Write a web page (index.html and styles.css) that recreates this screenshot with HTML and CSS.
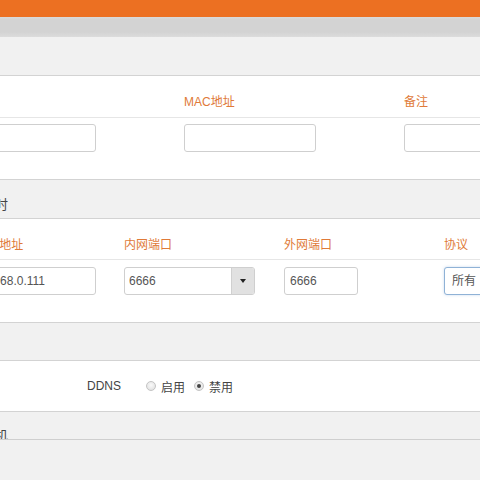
FILE: index.html
```html
<!DOCTYPE html>
<html lang="zh">
<head>
<meta charset="utf-8">
<title>端口映射</title>
<link rel="stylesheet" href="styles.css">
</head>
<body>
<div class="topbar"></div>
<div class="nav"></div>
<div class="head head-first"></div>

<div class="panel">
  <div class="label-row row-a cols-wide">
    <div class="col"></div>
    <div class="col"><span class="lbl">MAC地址</span></div>
    <div class="col"><span class="lbl">备注</span></div>
  </div>
  <div class="input-row row-a cols-wide">
    <div class="col"><div class="input w132"></div></div>
    <div class="col"><div class="input w132"></div></div>
    <div class="col"><div class="input w132"></div></div>
  </div>
</div>

<div class="head head-mid"><span class="head-text">定时</span></div>

<div class="panel">
  <div class="label-row row-b cols-narrow">
    <div class="col"><span class="lbl">内网IP地址</span></div>
    <div class="col"><span class="lbl">内网端口</span></div>
    <div class="col"><span class="lbl">外网端口</span></div>
    <div class="col"><span class="lbl">协议</span></div>
  </div>
  <div class="input-row row-c cols-narrow">
    <div class="col"><div class="input w132">192.168.0.111</div></div>
    <div class="col">
      <div class="select w130">
        <span class="select-val">6666</span>
        <span class="select-btn"><span class="caret"></span></span>
      </div>
    </div>
    <div class="col"><div class="input w73">6666</div></div>
    <div class="col"><div class="input focus w80">所有</div></div>
  </div>
</div>

<div class="head head-empty"></div>

<div class="panel ddns-panel">
  <div class="ddns">
    <span class="ddns-label">DDNS</span>
    <span class="radio"></span><span class="radio-text">启用</span>
    <span class="radio checked"></span><span class="radio-text">禁用</span>
  </div>
</div>

<div class="head head-last"><span class="head-text">主机</span></div>
</body>
</html>
```
FILE: styles.css
```css
html, body {
  margin: 0;
  padding: 0;
  background: #f1f1f1;
  overflow: hidden;
  font-family: "Liberation Sans", "Noto Sans CJK SC", sans-serif;
  font-size: 12px;
  color: #444;
}

.topbar {
  height: 17px;
  background: #ec7022;
}

.nav {
  height: 20px;
  background: linear-gradient(#dadada 0, #d3d3d3 3px, #d3d3d3 15px, #dcdcdc 20px);
}

.head {
  box-sizing: border-box;
  background: #f1f1f1;
  border-bottom: 1px solid #d3d3d3;
  line-height: 18px;
  font-size: 13px;
  color: #444;
  overflow: hidden;
}

.head-first {
  height: 39px;
}

.head-mid {
  height: 39px;
  padding-top: 16px;
}

.head-text {
  display: inline-block;
  margin-left: -18px;
}

.head-empty {
  height: 38px;
}

.head-last {
  height: 28px;
  padding-top: 17px;
  line-height: 14px;
  border-bottom-color: #cfcfcf;
}

.panel {
  background: #fff;
  border-bottom: 1px solid #d3d3d3;
}

.label-row {
  display: flex;
  box-sizing: border-box;
  padding-top: 17px;
  line-height: 18px;
  border-bottom: 1px solid #e6e6e6;
  margin-left: -36px;
}

.label-row.row-a {
  height: 42px;
}

.label-row.row-b {
  height: 41px;
}

.lbl {
  color: #e07a38;
  font-size: 12px;
  white-space: nowrap;
}

.input-row {
  display: flex;
  margin-left: -36px;
  box-sizing: border-box;
}

.input-row.row-a {
  padding-top: 6px;
  height: 61px;
}

.input-row.row-c {
  padding-top: 7px;
  height: 62px;
}

.cols-wide .col {
  flex: 0 0 220px;
}

.cols-narrow .col {
  flex: 0 0 160px;
}

.input,
.select {
  height: 28px;
  box-sizing: border-box;
  border: 1px solid #cfcfcf;
  border-radius: 3px;
  padding-left: 5px;
  line-height: 26px;
  color: #555;
  font-size: 12px;
  white-space: nowrap;
  overflow: hidden;
  background: #fff;
}

.w132 { width: 132px; }
.w130 { width: 131px; }
.w73 { width: 74px; }
.w80 { width: 80px; padding-left: 7px; }

.focus {
  border-color: #8fb2d6;
  box-shadow: 0 0 3px rgba(102, 150, 210, 0.35);
}

.select {
  display: flex;
  padding-left: 0;
}

.select-val {
  flex: 1;
  padding-left: 4px;
}

.select-btn {
  flex: 0 0 22px;
  background: #e1e1e1;
  border-left: 1px solid #d0d0d0;
  display: flex;
  align-items: center;
  justify-content: center;
}

.caret {
  width: 0;
  height: 0;
  border-left: 3px solid transparent;
  border-right: 3px solid transparent;
  border-top: 4px solid #222;
}

.ddns-panel {
  height: 50px;
}

.ddns {
  display: flex;
  align-items: center;
  height: 50px;
  padding-left: 87px;
}

.ddns-label {
  color: #444;
  margin-right: 25px;
}

.radio {
  width: 10px;
  height: 10px;
  box-sizing: border-box;
  border-radius: 50%;
  border: 1px solid #c4c4c4;
  background: radial-gradient(circle at 50% 40%, #fafafa 0, #dcdcdc 100%);
  margin-right: 5px;
  position: relative;
}

.radio.checked::after {
  content: "";
  position: absolute;
  left: 2px;
  top: 2px;
  width: 4px;
  height: 4px;
  border-radius: 50%;
  background: #444;
}

.radio-text {
  color: #444;
  margin-right: 9px;
}
```
